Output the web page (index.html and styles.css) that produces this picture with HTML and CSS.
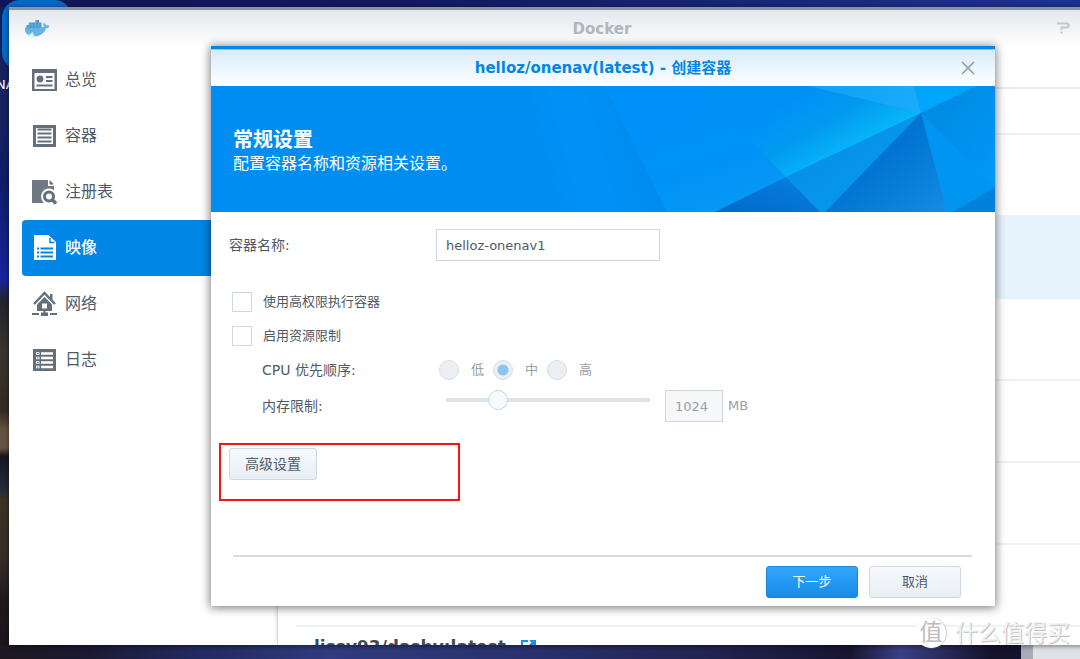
FILE: index.html
```html
<!DOCTYPE html>
<html lang="zh-CN">
<head>
<meta charset="utf-8">
<title>Docker</title>
<link rel="stylesheet" href="styles.css">
</head>
<body>
<div class="desktop">
  <div class="shortcut" aria-hidden="true"></div>
  <span class="shortcut-name">NA</span>
  <div class="widget" aria-hidden="true"></div>

  <main class="window">
    <header class="window-bar">
      <svg class="whale" viewBox="0 0 26 20" width="26" height="20" aria-hidden="true">
        <path d="M1 8.500H17.500C19.500 8.500 20 7.500 19.500 6.500C19 5 19.500 4.500 20.500 3.800L22.300 6.500C23.500 6 25 6.300 25.500 7C25 8.800 24 9.300 22 9.300C20 15 15.500 17.500 10 17.500C3.500 17.500 .5 14 1 8.500Z" fill="#64b4e8"/>
        <path d="M2.500 6H5V3.500H11.500V1H15V3.500H17.500V9H2.500Z" fill="#4c9bc8"/>
        <path d="M5 6H17M5 3.500V9M8.200 3.500V9M11.500 3.500V9M14.700 3.500V9" stroke="#6eb4dc" stroke-width=".6"/>
        <path d="M4 15C6 15.500 7.500 14.500 8.500 13C9 15.500 10 16.500 11.500 17.300C8 18 5.500 17 4 15Z" fill="#e4f3fc"/>
      </svg>
      <h1 class="window-title">Docker</h1>
      <button class="help" type="button" aria-label="帮助">
        <svg viewBox="0 0 14 12" width="14" height="12"><path d="M1 1.500H10.500Q12.500 1.500 12.500 3V4Q12.500 5.500 10.500 5.500H5.500V8M5.500 9.500V11.500" fill="none" stroke="#c3c6ca" stroke-width="2"/></svg>
      </button>
    </header>

    <div class="window-body">
      <nav class="sidebar">
        <a class="nav-item" href="#overview">
          <svg viewBox="0 0 26 26" width="26" height="26"><path d="M0 2H25V24H0Z" fill="#646f7b"/><path d="M2.500 6H22.500V22H2.500Z" fill="#fff"/><circle cx="8" cy="12" r="3.400" fill="#646f7b"/><path d="M14 10H20.500M14 14H20.500M4.500 18.500H20.500" stroke="#646f7b" stroke-width="2"/></svg>
          总览</a>
        <a class="nav-item" href="#container">
          <svg viewBox="0 0 26 26" width="26" height="26" fill="none" stroke="#646f7b"><path d="M1 3.500H24M1 22.500H24" stroke-width="3"/><path d="M2.500 5V21M22.500 5V21" stroke-width="3"/><path d="M5.500 6.500H19.500M5.500 10.500H19.500M5.500 14.500H19.500M5.500 18.500H19.500" stroke-width="2"/></svg>
          容器</a>
        <a class="nav-item" href="#registry">
          <svg viewBox="0 0 26 26" width="26" height="26"><path d="M0 1H16V7H22V24H0Z" fill="#6f7883"/><path d="M17.500 1L22 5.500H17.500Z" fill="#646f7b"/><circle cx="17" cy="17.500" r="8" fill="#fff"/><circle cx="17" cy="17.500" r="4.500" fill="#fff" stroke="#646f7b" stroke-width="3"/><path d="M20 20.500L24 24.500" stroke="#646f7b" stroke-width="3.500"/></svg>
          注册表</a>
        <a class="nav-item active" href="#image" aria-current="page">
          <svg viewBox="0 0 26 26" width="26" height="26"><path d="M2 0H16.500L24 7V25H2Z" fill="#fff"/><path d="M18 3V7.500H22.500" fill="none" stroke="#0086e5" stroke-width="1.500"/><path d="M8.500 13.500H21M8.500 17.500H21M8.500 21.500H21" stroke="#0086e5" stroke-width="2"/><path d="M5 13.500H7M5 17.500H7M5 21.500H7" stroke="#0086e5" stroke-width="2"/></svg>
          映像</a>
        <a class="nav-item" href="#network">
          <svg viewBox="0 0 26 26" width="26" height="26"><path d="M2 13L12.500 2L23 13" fill="none" stroke="#646f7b" stroke-width="2.500"/><path d="M18 3H20.500V9L18 6.500Z" fill="#646f7b"/><path d="M12.500 6L20 13.500V20H5V13.500Z" fill="#646f7b"/><path d="M10 12.500H15V17.500H10Z" fill="#fff"/><path d="M0 23H7M9 23H16M18 23H25M12.500 20V23" stroke="#646f7b" stroke-width="2"/><path d="M9 21.500H16V25H9Z" fill="#646f7b"/></svg>
          网络</a>
        <a class="nav-item" href="#log">
          <svg viewBox="0 0 26 26" width="26" height="26"><path d="M1 2H24V24H1Z" fill="#646f7b"/><path d="M4 6.500H7.500M4 11H7.500M4 15.500H7.500M4 20H7.500M9 6.500H21M9 11H21M9 15.500H21M9 20H21" stroke="#fff" stroke-width="2.500"/><path d="M5 6.500H6.500M5 11H6.500M5 15.500H6.500M5 20H6.500" stroke="#646f7b" stroke-width="1"/></svg>
          日志</a>
      </nav>

      <section class="images">
        <div class="toolbar"></div>
        <div class="filter"></div>
        <ul class="image-list">
          <li class="image-row"></li>
          <li class="image-row selected"></li>
          <li class="image-row"></li>
          <li class="image-row"></li>
          <li class="image-row"></li>
          <li class="image-row"></li>
          <li class="image-row">
            <span>lissy93/dashy:latest</span>
            <svg viewBox="0 0 15 15" width="15" height="15" aria-hidden="true"><path d="M7 2H1V13.500H13V8" fill="none" stroke="#168eea" stroke-width="2"/><path d="M8 1H15V8L12.500 5.500L7 11L5 9L10.500 3.500Z" fill="#168eea"/></svg>
          </li>
        </ul>
      </section>
    </div>
  </main>

  <div class="dialog-layer">
    <form class="dialog" role="dialog" aria-labelledby="dialog-title">
      <header class="dialog-bar">
        <h2 class="dialog-title" id="dialog-title">helloz/onenav(latest) - 创建容器</h2>
        <button class="close" type="button" aria-label="关闭">
          <svg viewBox="0 0 14 14" width="14" height="14"><path d="M1 1L13 13M13 1L1 13" stroke="#949ca6" stroke-width="1.600"/></svg>
        </button>
      </header>

      <div class="banner">
        <svg class="banner-art" viewBox="0 0 784 126" preserveAspectRatio="xMaxYMid slice" aria-hidden="true">
          <defs>
            <linearGradient id="fold" gradientUnits="userSpaceOnUse" x1="320" y1="30" x2="430" y2="0"><stop offset="0" stop-color="#008df1"/><stop offset=".35" stop-color="#0092f9"/><stop offset="1" stop-color="#008aec"/></linearGradient>
            <linearGradient id="plane" x1="0" y1="0" x2="1" y2="1"><stop offset="0" stop-color="#0091fc"/><stop offset=".45" stop-color="#0093f7"/><stop offset=".8" stop-color="#0a9cf2"/></linearGradient>
            <linearGradient id="glow" gradientUnits="userSpaceOnUse" x1="596" y1="4" x2="636" y2="72"><stop offset="0" stop-color="#0091f6"/><stop offset=".5" stop-color="#029bf0"/><stop offset="1" stop-color="#08b9f9"/></linearGradient>
            <linearGradient id="pale" x1="0" x2="1"><stop offset="0" stop-color="#10a0f6"/><stop offset="1" stop-color="#1aabfa"/></linearGradient>
            <linearGradient id="deep" x1="0" y1="1" x2="1" y2="0"><stop offset="0" stop-color="#0069c9"/><stop offset="1" stop-color="#087fe4"/></linearGradient>
            <linearGradient id="wing" x1="0" y1="0" x2="1" y2="1"><stop offset="0" stop-color="#058ce4"/><stop offset="1" stop-color="#089bf0"/></linearGradient>
            <linearGradient id="shade" x1="0" y1="0" x2="1" y2="1"><stop offset="0" stop-color="#0070cc"/><stop offset=".45" stop-color="#0074d0"/><stop offset="1" stop-color="#148be4"/></linearGradient>
            <linearGradient id="side" x1="0" y1="0" x2="1" y2="1"><stop offset="0" stop-color="#0087df"/><stop offset="1" stop-color="#0099f7"/></linearGradient>
          </defs>
          <path d="M320 0H784V126H320Z" fill="url(#fold)"/>
          <path d="M394 0H784V126H456Z" fill="url(#plane)"/>
          <path d="M488 0H710V27L575 91Z" fill="url(#glow)"/>
          <path d="M598 0H703L710 27Z" fill="url(#pale)"/>
          <path d="M703 0H766L710 27Z" fill="#00a5fc"/>
          <path d="M766 0H784V101L710 27Z" fill="url(#side)"/>
          <path d="M710 27L784 101V126H736Z" fill="#0095f0"/>
          <path d="M784 101V126H742Z" fill="#0082da"/>
          <path d="M575 91L710 27L615 126H609Z" fill="url(#wing)"/>
          <path d="M710 27L736 126H614Z" fill="url(#shade)"/>
          <path d="M575 91L609 126H504Z" fill="url(#deep)"/>
        </svg>
        <h3 class="banner-title">常规设置</h3>
        <p class="banner-text">配置容器名称和资源相关设置。</p>
      </div>

      <div class="fields">
        <div class="row name-row">
          <label class="caption" for="name">容器名称:</label>
          <input class="text-box name-box" id="name" type="text" value="helloz-onenav1">
        </div>
        <label class="row check-row"><input class="check" type="checkbox">使用高权限执行容器</label>
        <label class="row check-row"><input class="check" type="checkbox">启用资源限制</label>
        <div class="row priority-row" role="radiogroup" aria-labelledby="cpu">
          <span class="caption nested" id="cpu">CPU 优先顺序:</span>
          <div class="choices">
            <label class="choice"><input class="radio" type="radio" name="cpu" disabled>低</label>
            <label class="choice"><input class="radio" type="radio" name="cpu" checked disabled>中</label>
            <label class="choice"><input class="radio" type="radio" name="cpu" disabled>高</label>
          </div>
        </div>
        <div class="row memory-row">
          <label class="caption nested" for="memory">内存限制:</label>
          <input class="slider" type="range" min="0" max="100" value="23" aria-label="内存限制" disabled>
          <input class="text-box memory-box" id="memory" type="text" value="1024" disabled>
          <span class="unit">MB</span>
        </div>
        <div class="marked">
          <button class="button advanced" type="button">高级设置</button>
        </div>
      </div>

      <footer class="actions">
        <button class="button primary" type="submit">下一步</button>
        <button class="button" type="button">取消</button>
      </footer>
    </form>
  </div>

  <div class="watermark"><span class="seal">值</span><span>什么值得买</span></div>
</div>
</body>
</html>
```
FILE: styles.css
```css
* { box-sizing: border-box; }

body {
  margin: 0;
  overflow: hidden;
  font: 13px/20px "DejaVu Sans", "Noto Sans CJK SC", sans-serif;
  color: #505a66;
}

h1, h2, h3, p, ul { margin: 0; padding: 0; }
button, input { font: inherit; color: inherit; margin: 0; }
svg { display: block; flex: none; }

.desktop {
  position: relative;
  display: flex;
  min-height: 100vh;
  padding: 7px 0 14px 9px;
  overflow: hidden;
  background:
    linear-gradient(90deg, #1c1720 0, #1b1a33 90px, #222a62 200px, #303b80 330px, #29316f 520px, #222452 700px, #171530 850px, #3a4086 900px, #15132c 990px) 0 100% / 100% 14px no-repeat,
    linear-gradient(90deg, #101655, #131a63 40%, #1d3291) 0 0 / 100% 7px no-repeat,
    linear-gradient(#12205a 0, #16235f 120px, #101c66 180px, #17259a 280px, #20242e 300px, #3b332f 350px, #332b22 410px, #66523f 430px, #665446 448px, #16171f 456px, #252a3a 490px, #3e3424 500px, #352c28 560px, #201a1e 600px, #18151b 100%);
}

.shortcut {
  position: absolute;
  top: 0;
  left: 2px;
  width: 70px;
  height: 70px;
  border-radius: 18px;
  background: #0868c8;
}

.shortcut-name {
  position: absolute;
  top: 75px;
  left: -4px;
  color: #fff;
  font-size: 13px;
}

.widget {
  position: absolute;
  right: 0;
  bottom: 0;
  width: 59px;
  height: 16px;
  border-left: 12px solid #aaabb4;
  background: #dfe2e7;
}

/* The window runs past the right edge of the desktop. */
.window {
  position: relative;
  display: flex;
  flex: 1;
  flex-direction: column;
  margin-right: -115px;
  overflow: hidden;
  border-top: 3px solid #8b92a0;
  background: #fff;
  box-shadow: 0 1px 5px rgba(0, 0, 0, .5);
}

.window-bar {
  display: flex;
  align-items: flex-start;
  height: 42px;
  padding: 9px 122px 0 15px;
  background: linear-gradient(#e3e7ec, #fff 36px);
}

.window-title {
  flex: 1;
  padding-left: 101px;
  font-size: 15px;
  line-height: 20px;
  text-align: center;
  color: #b3b6ba;
}

.help, .close {
  display: grid;
  place-items: center;
  padding: 0;
  border: 0;
  background: none;
}

.help { width: 20px; height: 18px; }

.window-body { display: flex; flex: 1; min-height: 0; }

.sidebar {
  flex: none;
  width: 268px;
  padding-left: 13px;
}

.nav-item {
  display: flex;
  align-items: center;
  gap: 7px;
  height: 56px;
  padding-left: 10px;
  border-radius: 4px 0 0 4px;
  color: #505a66;
  font-size: 16px;
  text-decoration: none;
}

.nav-item.active { background: #0086e5; color: #fff; font-weight: 500; }

.images {
  flex: 1;
  height: 0;
  min-height: 100%;
  padding-left: 18px;
  border-left: 1px solid #dcdee2;
  box-shadow: -4px 0 3px -3px rgba(0, 0, 0, .12);
}

.toolbar { height: 37px; border-bottom: 2px solid #e6ebf4; }
.filter { height: 46px; border-bottom: 2px solid #eef2f8; }

.image-list { list-style: none; }

.image-row {
  display: flex;
  align-items: flex-start;
  gap: 15px;
  height: 82px;
  padding: 8px 18px;
  border-bottom: 2px solid #edf2f8;
  font-size: 17px;
  font-weight: 700;
  line-height: 24px;
  color: #414b55;
}

.image-row svg { margin-top: 4px; }
.image-row.selected { background: #e6f3fd; border-color: #e6f3fd; }

.dialog-layer {
  position: absolute;
  top: 46px;
  left: 211px;
  right: 85px;
}

.dialog {
  border-top: 3px solid #0086e5;
  background: #fff;
  box-shadow: 0 1px 9px 1px rgba(0, 0, 0, .5);
}

.dialog-bar {
  display: flex;
  align-items: center;
  height: 37px;
  padding: 0 17px;
  border-top: 1px solid #8fc9f3;
  background: linear-gradient(#d8ebfa, #fff);
}

.dialog-title {
  flex: 1;
  padding-left: 20px;
  font-size: 15px;
  line-height: 20px;
  text-align: center;
  color: #0086e5;
}

.close { width: 20px; height: 20px; }

.banner {
  position: relative;
  height: 126px;
  padding: 42px 22px 0;
  background: #008df1;
  color: #fff;
}

.banner-art {
  position: absolute;
  inset: 0;
  width: 100%;
  height: 100%;
}

.banner-title, .banner-text { position: relative; }
.banner-title { font-size: 20px; line-height: 24px; }
.banner-text { font-size: 16px; line-height: 24px; }

.fields { padding: 17px 8px 0; }

.row {
  display: flex;
  align-items: center;
  min-height: 34px;
  padding-left: 10px;
}

.caption { width: 207px; font-size: 14px; }
.caption.nested { padding-left: 33px; }

.text-box {
  height: 32px;
  padding: 0 9px;
  border: 1px solid #ced8e2;
  border-radius: 0;
  background: #fff;
}

.name-row { min-height: 32px; margin-bottom: 24px; }
.name-box { width: 224px; }

.check-row { gap: 11px; padding-left: 13px; }

.check {
  width: 20px;
  height: 20px;
  border: 1px solid #ced8e2;
  background: #fff;
  appearance: none;
}

.choices { display: flex; gap: 9px; padding-left: 3px; }
.choice { display: flex; align-items: center; gap: 12px; color: #98a0aa; }

.radio {
  width: 20px;
  height: 20px;
  border: 1px solid #d5dee7;
  border-radius: 50%;
  background: #ebeff3;
  appearance: none;
}

.radio:checked { background: radial-gradient(circle, #8bc6f1 5px, #ebeff3 6px); }

.memory-row { min-height: 32px; margin-top: 3px; }

.slider {
  align-self: flex-start;
  width: 204px;
  height: 20px;
  margin: 0 15px 0 10px;
  background: linear-gradient(#dfe5e7, #dfe5e7) 0 50% / 100% 4px no-repeat;
  appearance: none;
}

.slider::-webkit-slider-thumb {
  width: 20px;
  height: 20px;
  border: 1px solid #ccd5de;
  border-radius: 50%;
  background: #f5faff;
  appearance: none;
}

.memory-box {
  width: 58px;
  background: #f6f7f9;
  color: #98a0aa;
}

.unit { padding-left: 5px; color: #98a0aa; }

/* Frame that calls attention to the advanced settings. */
.marked {
  width: 241px;
  height: 58px;
  margin-top: 21px;
  padding: 3px 8px;
  border: 2px solid #f21616;
}

.button {
  width: 92px;
  height: 32px;
  padding: 0;
  border: 1px solid #ced8e2;
  border-radius: 3px;
  background: linear-gradient(#f6fafe, #e9eef3);
}

.advanced { width: 88px; font-size: 14px; }

.primary {
  border-color: #1a86da;
  background: linear-gradient(#32a5ff, #168ce8);
  color: #fff;
}

.actions {
  display: flex;
  justify-content: flex-end;
  gap: 11px;
  margin: 54px 23px 0 22px;
  padding: 9px 11px 8px;
  border-top: 2px solid #dcdcdc;
}

.watermark {
  position: absolute;
  right: 10px;
  bottom: 11px;
  display: flex;
  align-items: center;
  gap: 9px;
  color: #f2f2f2;
  font-size: 23px;
  line-height: 30px;
  text-shadow: 1px 1px 0 #c2c2c2;
}

.seal {
  width: 30px;
  height: 30px;
  border-radius: 50%;
  background: #fff;
  box-shadow: 1px 0 1px #ccc;
  color: #bdbdbd;
  line-height: 28px;
  text-align: center;
  text-shadow: none;
}
```
